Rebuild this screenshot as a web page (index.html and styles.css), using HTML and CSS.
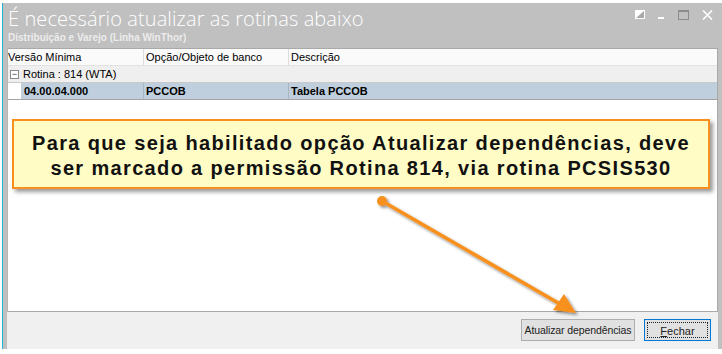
FILE: index.html
```html
<!DOCTYPE html>
<html lang="pt-BR">
<head>
    <meta charset="UTF-8">
    <meta name="viewport" content="width=device-width, initial-scale=1.0">
    <title>Atualizar rotinas</title>
    <link rel="stylesheet" href="styles.css">
</head>
<body>
    <div class="window">
        <div class="titlebar">
            <div class="titles">
                <h1 class="title">É necessário atualizar as rotinas abaixo</h1>
                <div class="subtitle">Distribuição e Varejo (Linha WinThor)</div>
            </div>
            <div class="controls">
                <svg class="ctl" width="10" height="9" viewBox="0 0 10 9">
                    <rect x="0.5" y="0.5" width="9" height="8" fill="#a8a8a8" stroke="#fff"/>
                    <polygon points="0,0 10,0 0,9" fill="#fff"/>
                </svg>
                <svg class="ctl" width="7" height="9" viewBox="0 0 7 9">
                    <rect x="0" y="7" width="6" height="2" fill="#fff"/>
                </svg>
                <svg class="ctl" width="11" height="10" viewBox="0 0 11 10">
                    <rect x="0.5" y="0.5" width="10" height="9" fill="none" stroke="#8c8c8c"/>
                    <rect x="0" y="0" width="11" height="2" fill="#8c8c8c"/>
                </svg>
                <svg class="ctl" width="11" height="10" viewBox="0 0 11 10">
                    <path d="M1 0.5 L10 9.5 M10 0.5 L1 9.5" stroke="#fff" stroke-width="1.6"/>
                </svg>
            </div>
        </div>

        <div class="content">
            <div class="grid">
                <div class="row head">
                    <span class="cell c1">Versão Mínima</span>
                    <span class="cell c2">Opção/Objeto de banco</span>
                    <span class="cell c3">Descrição</span>
                </div>
                <div class="row group">
                    <span class="toggle">−</span>
                    <span>Rotina : 814 (WTA)</span>
                </div>
                <div class="row item">
                    <span class="indent"></span>
                    <span class="cell c1">04.00.04.000</span>
                    <span class="cell c2">PCCOB</span>
                    <span class="cell c3">Tabela PCCOB</span>
                </div>
            </div>
            <div class="footer">
                <button class="btn">Atualizar dependências</button>
                <button class="btn focused"><span class="focus-ring"><u>F</u>echar</span></button>
            </div>
        </div>
    </div>

    <div class="callout">
        Para que seja habilitado opção Atualizar dependências, deve<br>
        ser marcado a permissão Rotina 814, via rotina PCSIS530
    </div>

    <svg class="arrow" width="722" height="354" viewBox="0 0 722 354">
        <defs>
            <filter id="shadow" x="-10%" y="-10%" width="130%" height="130%">
                <feDropShadow dx="2" dy="2" stdDeviation="1.6" flood-color="#000" flood-opacity="0.45"/>
            </filter>
        </defs>
        <g filter="url(#shadow)" fill="#f7901e" stroke="#f7901e">
            <circle cx="382" cy="201" r="5" stroke="none"/>
            <line x1="382" y1="201" x2="560" y2="304" stroke-width="3.5"/>
            <polygon points="576,313 553,310 564,294" stroke="none"/>
        </g>
    </svg>
</body>
</html>
```

FILE: styles.css
```css
body {
    margin: 0;
    padding: 0;
    width: 722px;
    height: 354px;
    background: #fff;
    overflow: hidden;
    position: relative;
    font-family: "Liberation Sans", Arial, sans-serif;
}

.window {
    margin: 3px 0 0 2px;
    height: 346px;
    border-left: 1px solid #1cb9d6;
    background: #c0c0c0;
    padding: 0 5px 0 4px;
    display: flex;
    flex-direction: column;
}

.titlebar {
    height: 45px;
    display: flex;
    justify-content: space-between;
    flex-shrink: 0;
}

.titles {
    padding: 3px 0 0 1px;
}

.title {
    margin: 0;
    font-family: "Open Sans", "Noto Sans", sans-serif;
    font-weight: 300;
    font-size: 20px;
    line-height: 26px;
    color: #fff;
    letter-spacing: 0.1px;
}

.subtitle {
    font-family: "Liberation Sans", Arial, sans-serif;
    font-weight: bold;
    font-size: 10px;
    line-height: 12px;
    color: #ececec;
}

.controls {
    display: flex;
    align-items: flex-start;
    gap: 13px;
    padding: 7px 4px 0 0;
}

.ctl {
    display: block;
}

.content {
    flex: 1;
    display: flex;
    flex-direction: column;
    margin-right: -1px;
}

.grid {
    flex: 1;
    background: #fff;
    border: 1px solid #a9a9a9;
    border-left-color: #b8b8b8;
    font-size: 11px;
    color: #000;
}

.row {
    display: flex;
    height: 17px;
    line-height: 16px;
    box-sizing: border-box;
}

.cell {
    padding-left: 2px;
    box-sizing: border-box;
}

.c1 { width: 136px; }
.c2 { width: 145px; }
.c3 { flex: 1; }

.head {
    background: #fafafa;
    border-bottom: 1px solid #e2e2e2;
}

.head .c1 { width: 136px; border-right: 1px solid #dcdcdc; padding-left: 0; }
.head .c2 { border-right: 1px solid #dcdcdc; }

.group {
    background: #efefef;
    border-bottom: 1px solid #c9c9c9;
    align-items: center;
}

.toggle {
    width: 7px;
    height: 7px;
    border: 1px solid #8a8a8a;
    background: #fff;
    font-size: 9px;
    line-height: 7px;
    text-align: center;
    color: #333;
    margin: 0 4px 0 2px;
}

.item {
    font-weight: bold;
    border-bottom: 1px solid #a4a4a4;
}

.item .indent {
    width: 13px;
    background: #fff;
}

.item .c1 {
    width: 123px;
    padding-left: 3px;
    background: #bfcfdd;
    border-right: 1px solid #a8b6c2;
}

.item .c2 {
    background: #bfcfdd;
    border-right: 1px solid #a8b6c2;
}

.item .c3 {
    background: #bfcfdd;
}

.footer {
    height: 37px;
    background: #f0f0f0;
    display: flex;
    justify-content: flex-end;
    align-items: flex-start;
    gap: 9px;
    padding: 7px 7px 0 0;
    box-sizing: border-box;
    flex-shrink: 0;
}

.btn {
    height: 22px;
    margin: 0;
    padding: 0;
    background: #e1e1e1;
    border: 1px solid #adadad;
    font-family: "Liberation Sans", Arial, sans-serif;
    font-size: 11px;
    color: #222;
    white-space: nowrap;
}

.btn:first-child {
    width: 114px;
    font-size: 10.5px;
    letter-spacing: -0.1px;
}

.btn.focused {
    width: 67px;
    border-color: #0078d7;
    padding: 2px;
}

.focus-ring {
    display: block;
    height: 100%;
    line-height: 16px;
    border: 1px dotted #222;
    box-sizing: border-box;
}

.callout {
    position: absolute;
    left: 12px;
    top: 119px;
    width: 698px;
    height: 70px;
    box-sizing: border-box;
    background: #fffcc6;
    border: 2px solid #f7901e;
    box-shadow: 3px 3px 4px rgba(0, 0, 0, 0.4);
    font-family: "Liberation Sans", Arial, sans-serif;
    font-weight: bold;
    font-size: 20px;
    line-height: 25px;
    letter-spacing: 1.35px;
    text-align: center;
    padding-top: 10px;
    color: #111;
}

.arrow {
    position: absolute;
    left: 0;
    top: 0;
    pointer-events: none;
}
```
